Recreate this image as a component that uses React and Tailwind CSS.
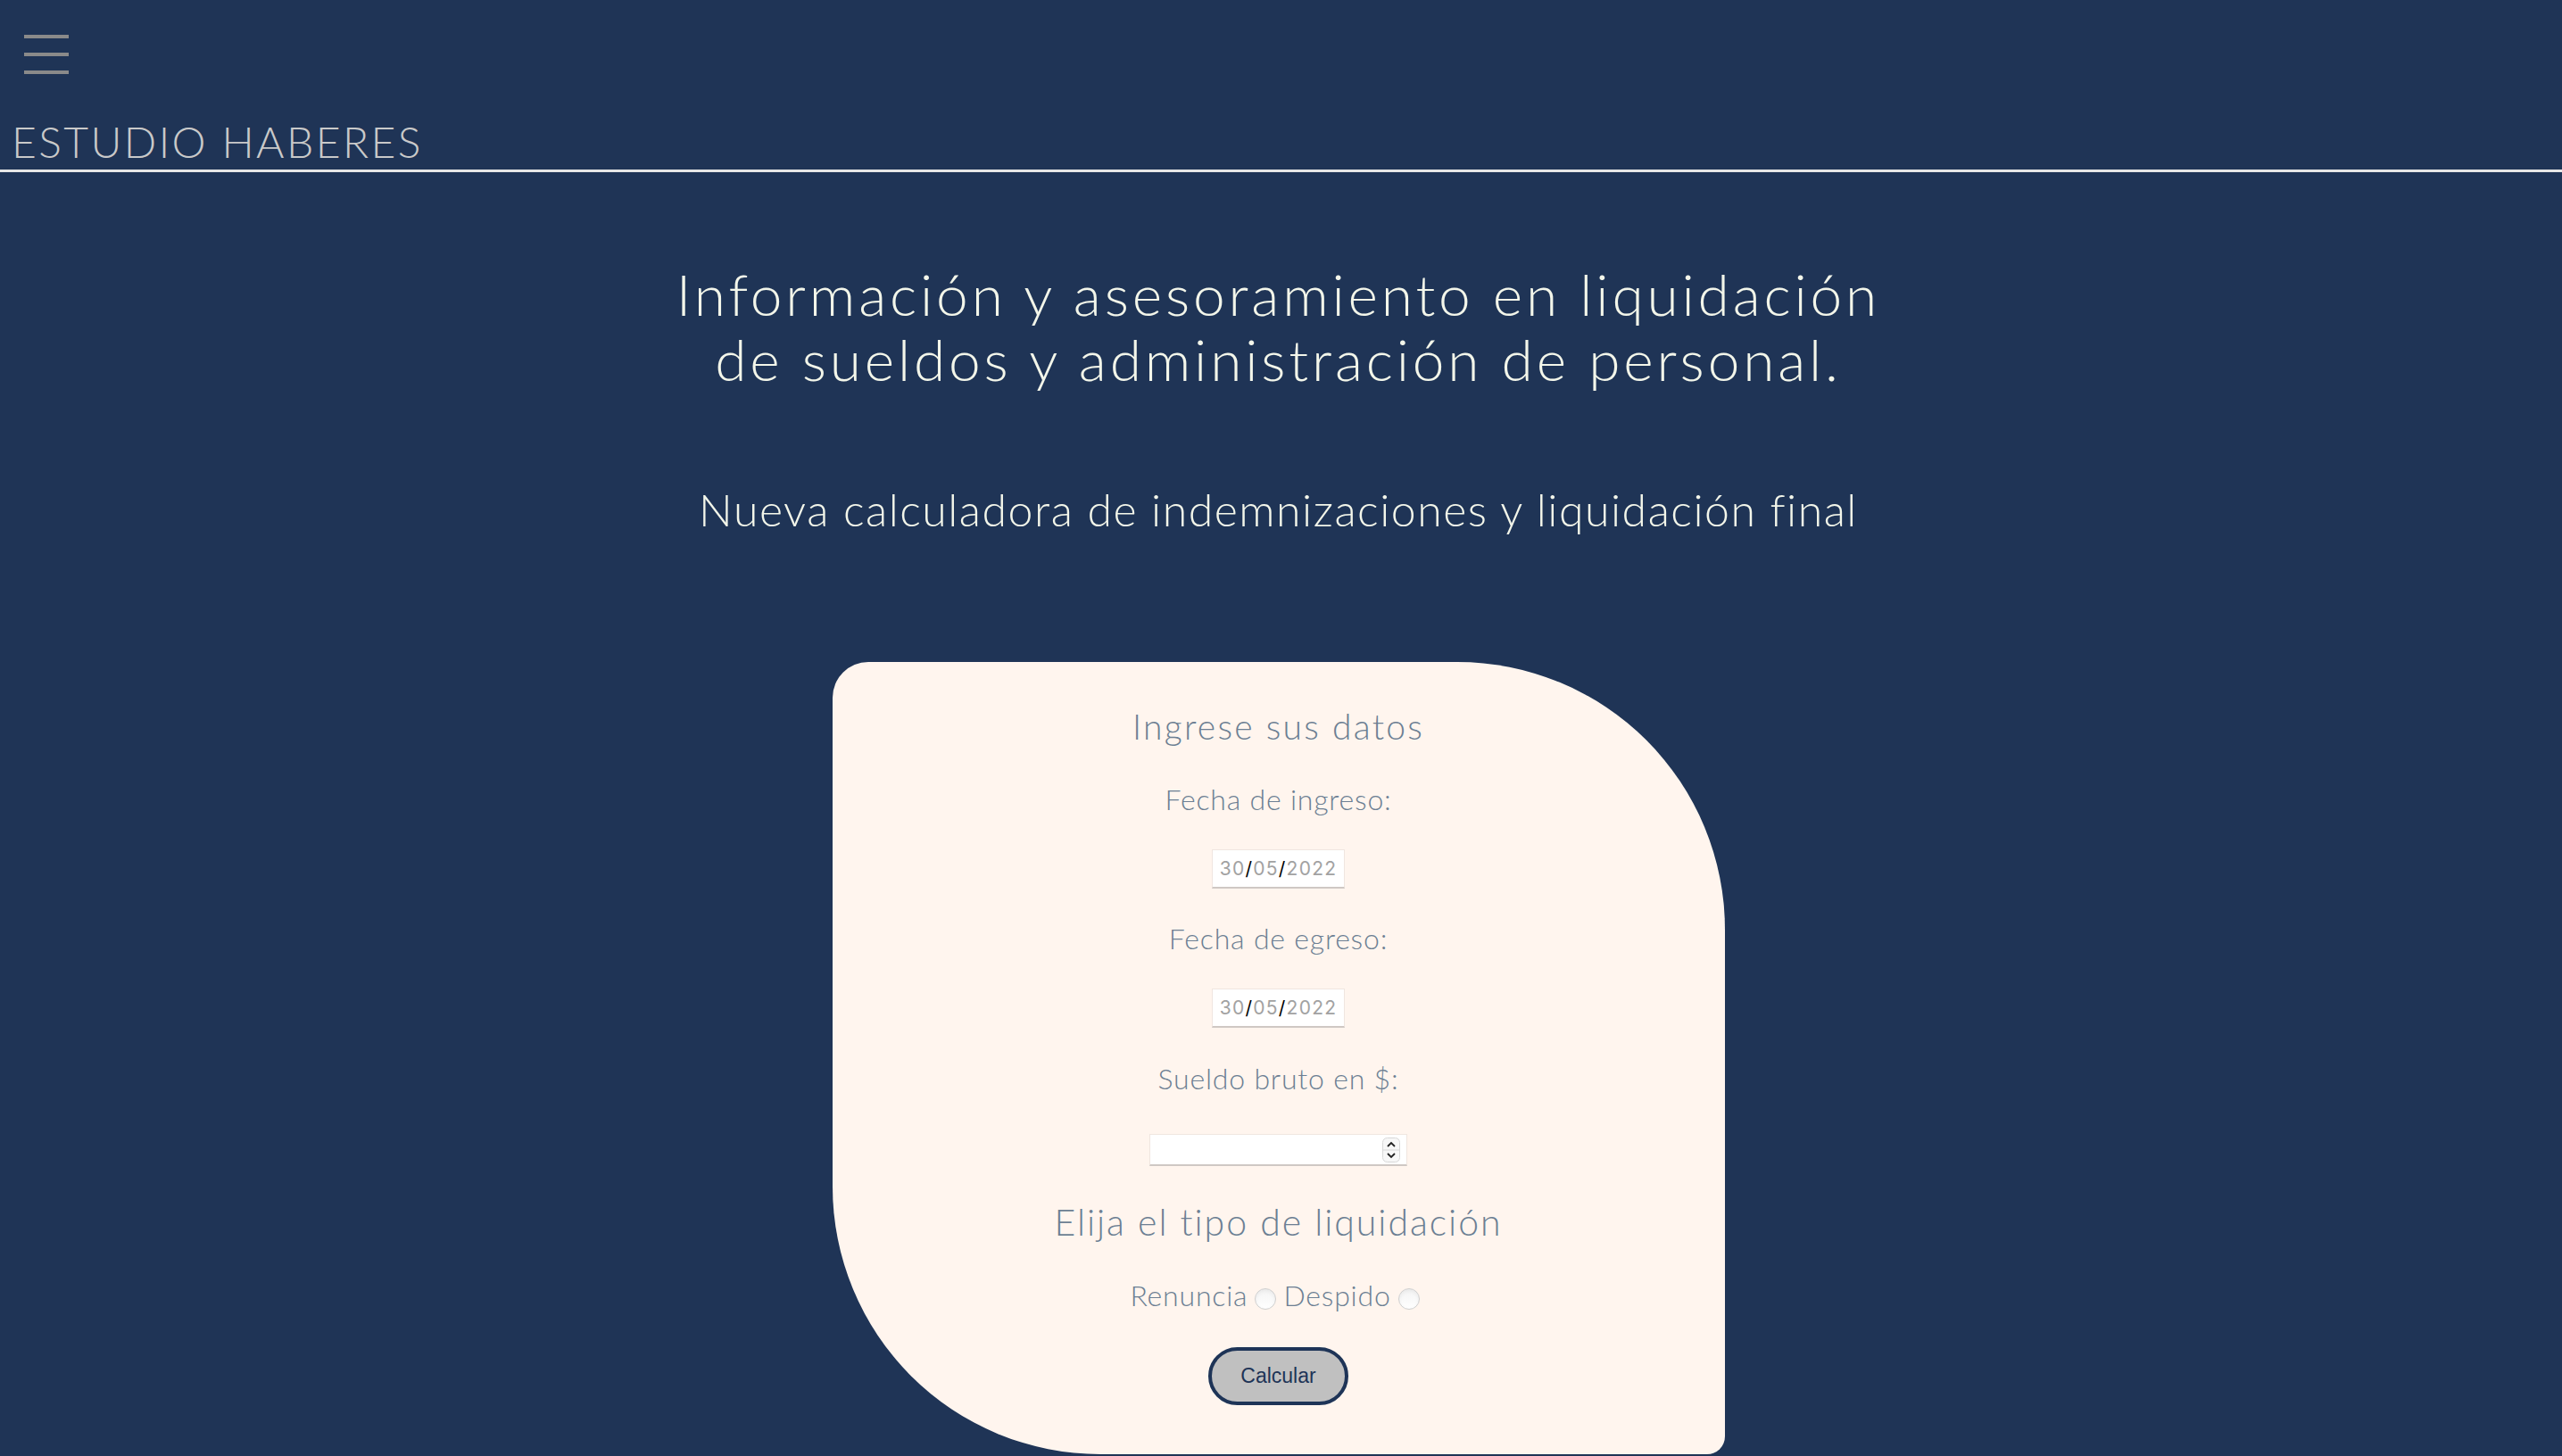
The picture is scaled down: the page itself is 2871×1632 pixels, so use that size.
import React from "react";

const DateBox = () => (
  <div className="w-[149px] h-[44px] bg-white border border-[#f0e6e0] border-b-[#cfc8c4] border-b-2 flex items-center justify-center font-['Inter',sans-serif] text-[21px] tracking-[0.06em] text-[#a2a2a2]">
    <span>30</span>
    <span className="text-black">/</span>
    <span>05</span>
    <span className="text-black">/</span>
    <span>2022</span>
  </div>
);

const Radio = () => (
  <span className="inline-block w-[24px] h-[24px] rounded-full bg-gradient-to-b from-[#f4f4f4] to-white border border-[#cfcfcf] shadow-inner mx-[8px] translate-y-[4px]" />
);

const App = () => {

  return (

    <div className="h-[1632px] overflow-hidden bg-[#1f3456] font-['Lato',sans-serif]">

      {/* Header */}

      <div className="pt-[39px] pl-[27px] flex flex-col gap-[16px]">
        <span className="block w-[50px] h-[4px] bg-[#8a8a8a]" />
        <span className="block w-[50px] h-[4px] bg-[#8a8a8a]" />
        <span className="block w-[50px] h-[4px] bg-[#8a8a8a]" />
      </div>

      <h1 className="mt-[52px] pl-[13px] text-[48px] leading-none font-light tracking-[0.05em] text-[#c9c9c9]">
        ESTUDIO HABERES
      </h1>

      <div className="mt-[7px] h-[3px] bg-[#e6e6e6]" />


      <div className="pr-[6px]">

        {/* Headline */}

        <h2 className="mt-[100px] text-center text-[64px] leading-[73px] font-light tracking-[0.06em] text-[#f3f6ea]">
          Información y asesoramiento en liquidación
          <br />
          de sueldos y administración de personal.
        </h2>

        <p className="mt-[107px] text-center text-[50px] leading-none font-light tracking-[0.03em] text-[#f3f6ea]">
          Nueva calculadora de indemnizaciones y liquidación final
        </p>


        {/* Calculator */}

        <div className="mt-[146px] mx-auto w-[1000px] h-[888px] bg-[#fff5ee] rounded-tl-[40px] rounded-tr-[300px] rounded-bl-[300px] rounded-br-[20px] flex flex-col items-center text-[#6c7f93] tracking-[0.05em] pt-[53px]">

          <h3 className="text-[39px] leading-none font-light tracking-[0.058em]">Ingrese sus datos</h3>

          <label className="mt-[46px] text-[32px] leading-none font-light">Fecha de ingreso:</label>
          <div className="mt-[40px]"><DateBox /></div>

          <label className="mt-[40px] text-[32px] leading-none font-light">Fecha de egreso:</label>
          <div className="mt-[40px]"><DateBox /></div>

          <label className="mt-[41px] text-[32px] leading-none font-light">Sueldo bruto en $:</label>

          <div className="mt-[46px] w-[289px] h-[36px] bg-white border border-[#f0e6e0] border-b-2 border-b-[#cfc8c4] flex items-center justify-end pr-[7px]">
            <svg width="20" height="28" viewBox="0 0 20 28">
              <rect x="0.5" y="0.5" width="19" height="27" rx="5" fill="#f7f7f7" stroke="#d8d8d8" />
              <line x1="1" y1="14" x2="19" y2="14" stroke="#d8d8d8" />
              <path d="M6 10 L10 6 L14 10" fill="none" stroke="#222" strokeWidth="1.8" />
              <path d="M6 18 L10 22 L14 18" fill="none" stroke="#222" strokeWidth="1.8" />
            </svg>
          </div>

          <h3 className="mt-[42px] text-[41px] leading-none font-light tracking-[0.048em]">Elija el tipo de liquidación</h3>

          <div className="mt-[46px] text-[32px] leading-none font-light flex items-center">
            <span>Renuncia</span>
            <Radio />
            <span>Despido</span>
            <Radio />
          </div>

          <button className="mt-[42px] w-[157px] h-[65px] rounded-full border-4 border-[#1e3457] bg-[#c0c0c0] text-[#1e3457] text-[23px] tracking-normal font-['Liberation_Sans',sans-serif]">
            Calcular
          </button>

        </div>

      </div>

    </div>

  );

};

export default App;
